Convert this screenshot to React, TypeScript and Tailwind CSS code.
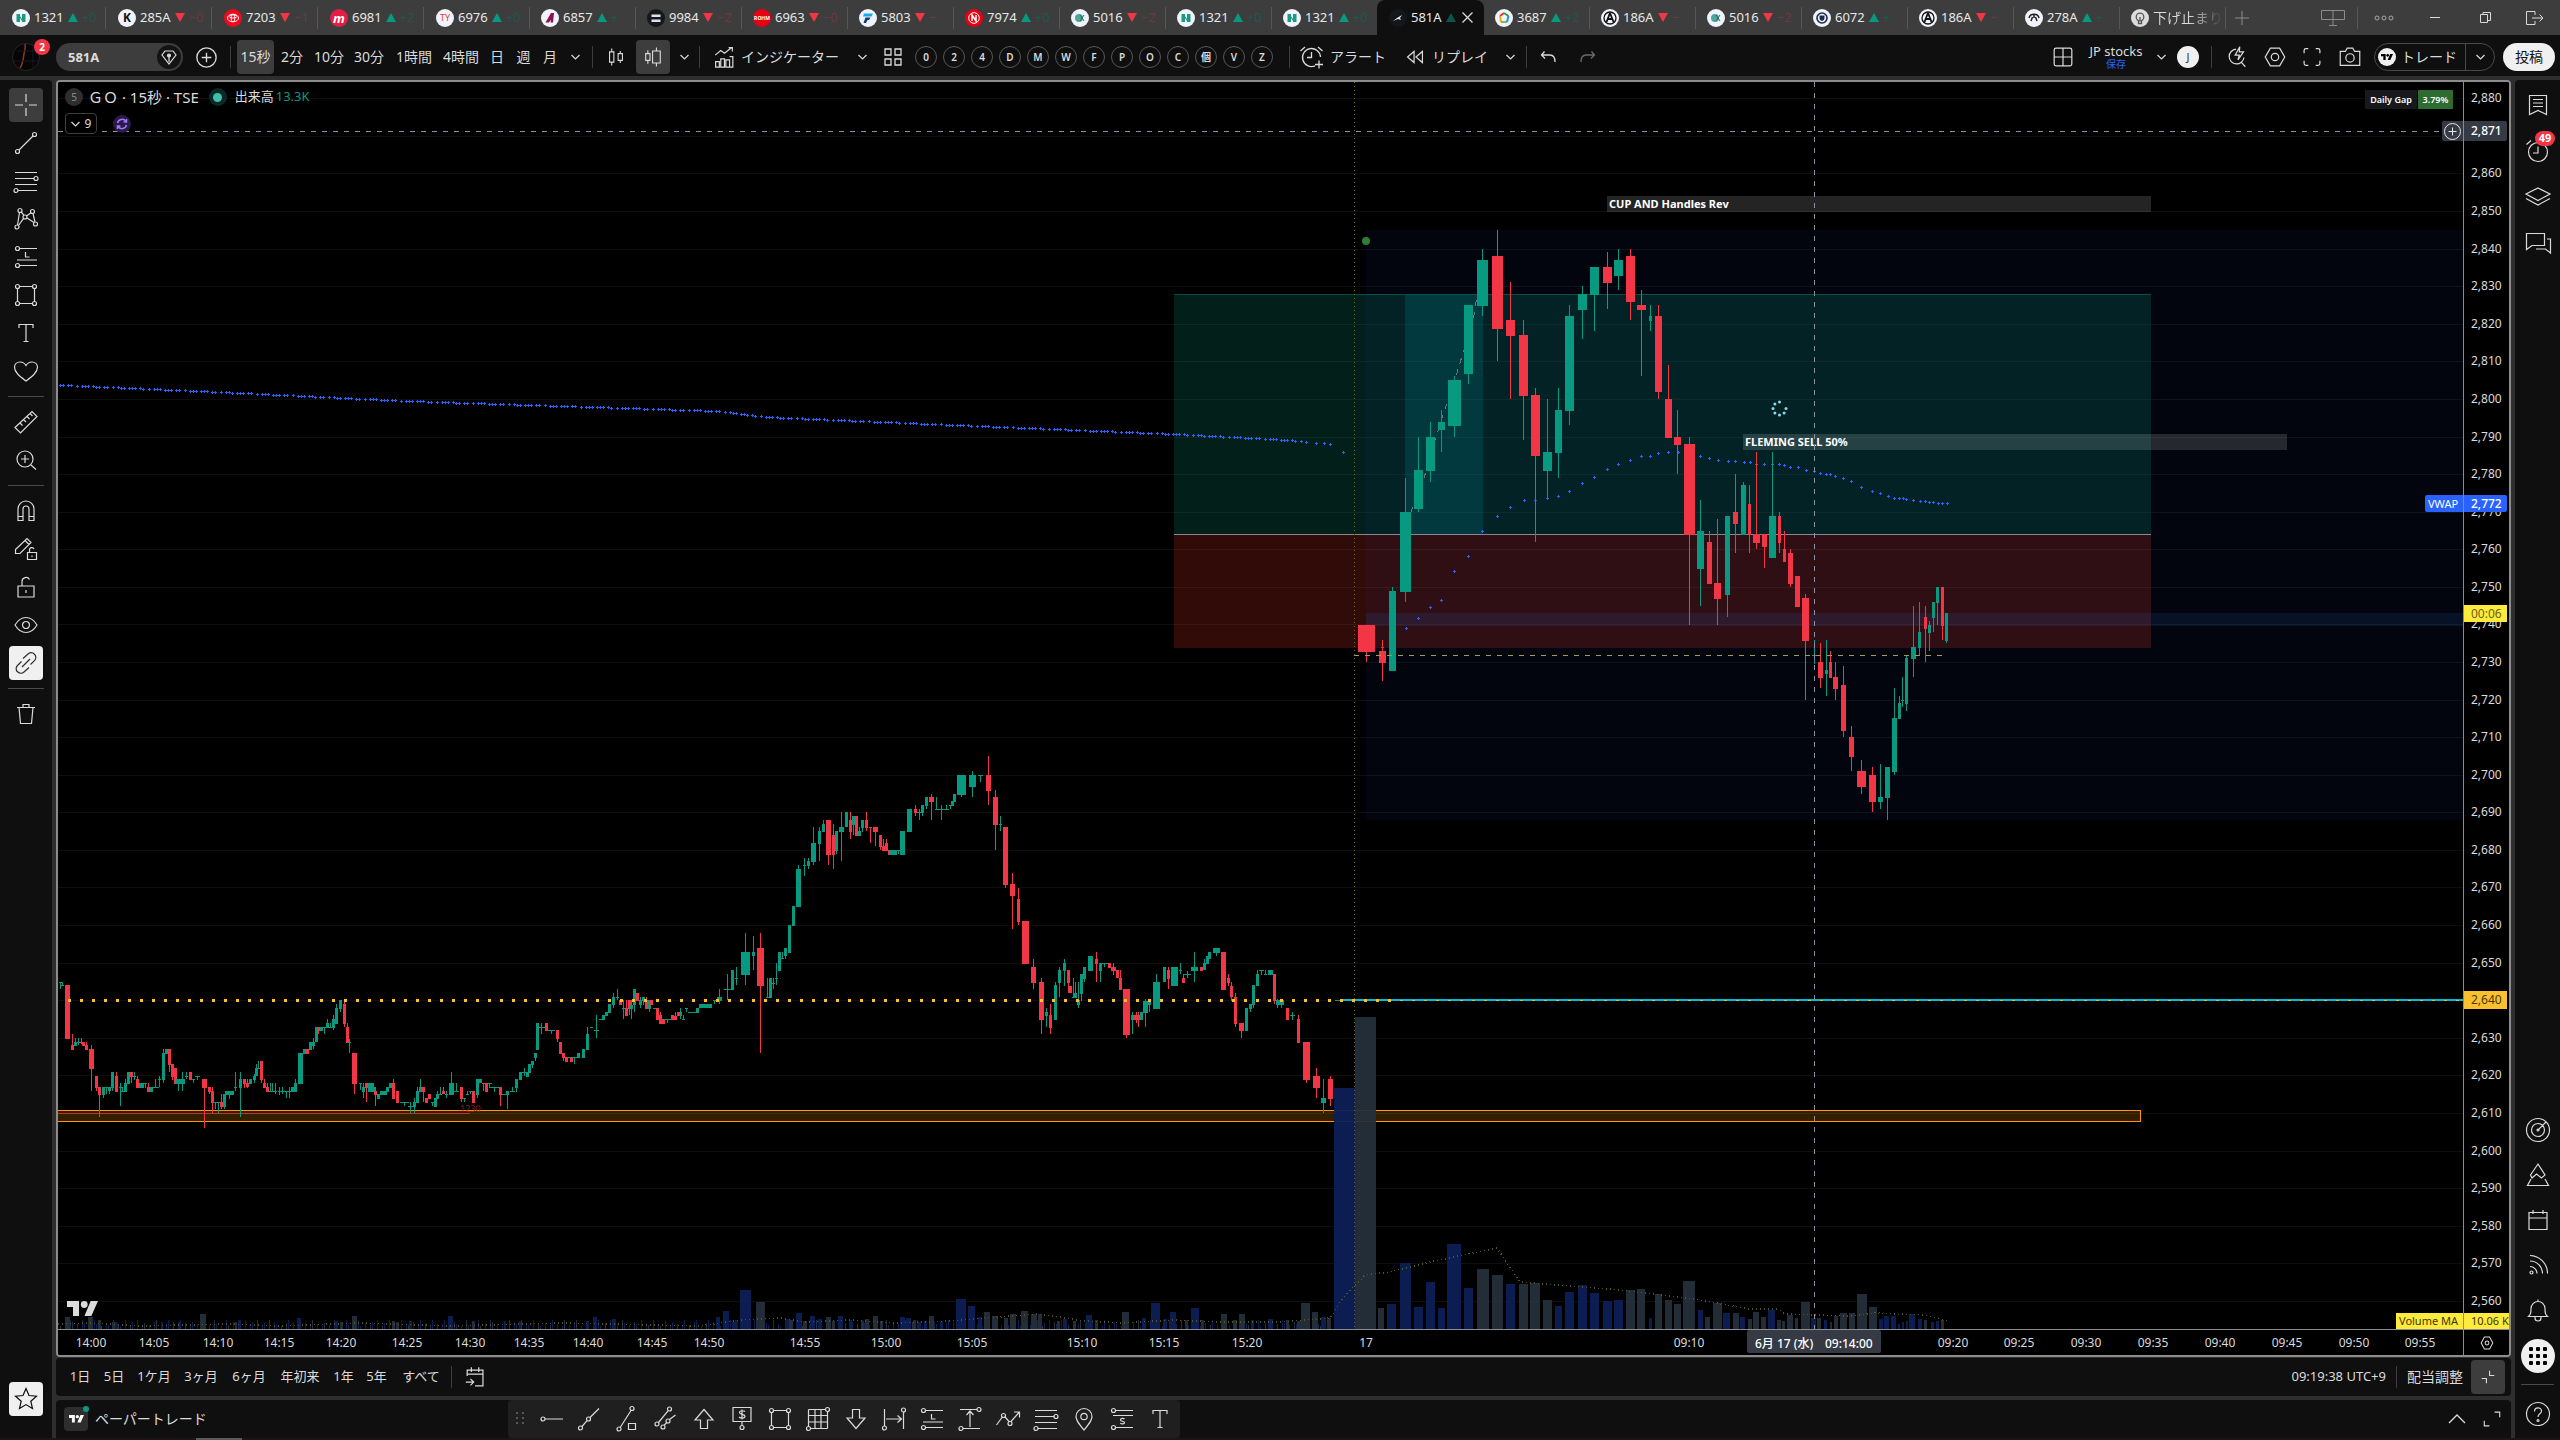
import React from "react";

const FONT = "font-['Noto_Sans','Noto_Sans_CJK_JP',sans-serif]";

/* ---------- icons ---------- */

const o = (x: number, y: number, r = 2) => `M${x - r} ${y}a${r} ${r} 0 1 0 ${2 * r} 0a${r} ${r} 0 1 0 ${-2 * r} 0`;

const ICONS: Record<string, string> = {
  cross: "M14 3v8M14 17v8M3 14h8M17 14h8",
  line: `${o(5.5, 22.5)}${o(22.5, 5.5)}M7 21L21 7`,
  fib: `M3 5.5h22M3 11.5h19M3 17.5h22M6 23.5h19${o(24, 11.5)}${o(4, 23.5)}`,
  pattern: `${o(5, 22)}${o(8, 5.5)}${o(13, 12)}${o(20.5, 6.5)}${o(23.5, 19)}M5.5 20L7.5 7.5M9.3 7L12 10.3M14.6 11L19 7.8M6.5 20.5L11.6 13.4M15 13L22 17.6M21 8.5L23 17`,
  forecast: `${o(5.5, 5.5)}${o(5.5, 22.5)}M7.5 5.5H25M5 17h20M7.5 22.5H25M13.5 9v5h4`,
  rect: `${o(5.5, 5.5)}${o(22.5, 5.5)}${o(5.5, 22.5)}${o(22.5, 22.5)}M7.5 5.5h13M7.5 22.5h13M5.5 7.5v13M22.5 7.5v13`,
  text: "M7 9V5.5h14V9M14 5.5v17M11.500 22.500h5",
  heart: "M14 24C8 19.500 2.500 15.500 2.500 10.300C2.500 7 5 5 8 5c2.500 0 4.700 1.300 6 3.500C15.300 6.300 17.500 5 20 5c3 0 5.500 2 5.500 5.300C25.500 15.500 20 19.500 14 24z",
  ruler: "M3 19.500L20 3.500l5 5L8.500 25zM8 15l2.500 2.500M11.500 11.500l2.500 2.500M15 8.500l2.500 2.500M18 5.500l2.500 2.500",
  zoom: `${o(13, 13, 8)}M19 19l5 4.500M13 9v8M9 13h8`,
  magnet: "M6 23.500V12a8 8 0 0 1 16 0v11.500h-5V12a3 3 0 0 0-6 0v11.500zM6 19.500h5M17 19.500h5",
  pencilLock: "M3.500 14.500L15 3.500l4 4L8 18.500H3.500zM13 5.500l4 4M15.500 17.500h9v7h-9zM17.500 17.500v-2.500a2.300 2.300 0 0 1 4.500-.8M20 20.500v1.500",
  lock: "M6 13h16v11H6zM10 13V8.500a4 4 0 0 1 7.500-2M14 17v3",
  eye: `M3 14c3-5 7-7.500 11-7.500S22 9 25 14c-3 5-7 7.500-11 7.500S6 19 3 14z${o(14, 14, 3.5)}`,
  link: "M11 9.500l5-4.500c2-1.600 4.500-1.600 6.500.3s1.600 4.700 0 6.300L18.500 15.500M9.500 12.500L5.500 16.500c-1.600 1.600-2 4.400 0 6.300s4.800 1.800 6.500.2l5-4.500M10 18l8-8",
  trash: "M5 7.500h18M11 7V4.500h6V7M7 7.500l1.500 16h11L21 7.500",
  star: "M14 3.500l3 7 7.500.7-5.700 5 1.700 7.300L14 19.600l-6.500 3.900 1.700-7.300-5.700-5 7.500-.7z",
  hline: `${o(5, 14)}M7 14h18`,
  lineMid: `${o(4.5, 23)}${o(12.5, 14)}M6 21.500L11 15.700M14 12.500L23 3.500`,
  lineBox: `${o(5, 24)}${o(18, 3.5)}M6.500 22L17 5.500M14.500 18.500h7v6h-7z`,
  channel: `${o(5, 19)}${o(17.500, 4)}${o(16, 16)}${o(11, 22)}M6.500 17.500L16 5.800M17.500 14.500L23.500 10M12 20.300L15 17.500`,
  up: "M14 4.500L23 15h-5.500v8.500h-7V15H5z",
  down: "M14 23.500L23 13h-5.500V4.500h-7V13H5z",
  dollar: `M5 2.500h18v14H5zM14 16.500v4${o(14, 22.5)}M17 6.500c-1-1-5.500-1.300-5.500 1s5.500 1.500 5.500 3.800-4.500 2.200-6 .7M14 4.500v10`,
  gridbox: `M4.500 4.500h17M4.500 4.500V22M23.500 6.500v17M6.500 23.500h17M4.500 10.500h19M4.500 17h19M11 4.500v19M17 4.500v19${o(23.5, 4.5)}${o(4.5, 23.5)}`,
  range: `M4.500 4v17M23.500 7v17M6 14h15M17.500 10.500l4 3.500-4 3.500${o(4.5, 23)}${o(23.5, 5)}`,
  vrange: `M4 4.500h17M7 23.500h17M14 7v15M10.500 10l3.500-4 3.500 4${o(23, 4.5)}${o(5, 23.5)}`,
  zigzag: `M2.500 20L8 12.500M11 12l4.500 5M17 16.500L25.500 7M20 7h5.500v5.500${o(9.5, 10.5)}${o(16, 18.5)}`,
  pin: `M14 25c-5-6-8-9.500-8-13.500a8 8 0 0 1 16 0C22 15.500 19 19 14 25z${o(14, 11.5, 3.2)}`,
  short: `${o(5.5, 5.5)}${o(5.5, 22.5)}M7.500 5.500H25M5 10.500h20M7.500 22.500H25M16.500 14c-1-1-4-.8-4 .9s4 1 4 2.700-3.200 1.700-4.200.5`,
  news: "M5.500 4.500h17v19l-8.500-4-8.500 4zM9 8.500h10M9 12h10M9 15.500h10",
  alarm: `${o(14, 15, 9.5)}M14 9.500V16H9M2.500 7.500L7 3.500M21 3.500l4.500 4`,
  layers: "M14 5L26 11 14 17.500 2 11zM2 15.500L14 22l12-6.500",
  chat: "M2.500 4.500h18v12H8l-5.500 4zM12 20h9.500l5 4V10h-3.500",
  radar: `${o(14, 14, 11.5)}${o(14, 14, 6.5)}${o(14, 14, 1)}M14 14L22 6`,
  mountain: "M14 3L21 14l-3.500 3-5-4-4.500 4L6.500 14zM7 18l-3.500 6.500h21L21 18",
  calendar: "M5 6.500h18v17H5zM5 12h18M9 4v4M19 4v4",
  rss: `${o(7.500, 21.500, 1.5)}M6 15.500a7 7 0 0 1 7 7M6 10a12.500 12.500 0 0 1 12.500 12.500M6 4.500a18 18 0 0 1 17.500 18`,
  bell: "M4.500 20.500c2-2 2.500-3 2.500-8a7 7 0 0 1 14 0c0 5 .5 6 2.500 8zM11 20.500v1.500a3 3 0 0 0 6 0v-1.500M14 5.500V3.500",
  help: `${o(14, 14, 11.5)}M10.500 11.500c0-5 7-4.700 7-.5 0 3-3.500 2.500-3.500 6${o(14, 20.5, 1)}`,
  candles: "M9 4v4M9 20v4M6.500 8h5v12h-5zM19 7v3M19 18v3M16.500 10h5v8h-5z",
  volCandles: "M8 6v4M8 18v4M5.500 10h5v8h-5zM18 3v4M18 21v4M13.500 7h9v14h-9z",
  indicators: "M4.500 12l6-5 4 3L22 4M19 4h4v4M5 19h4v6H5zM10.500 16h4v9h-4zM16 17h4v8h-4zM20 13.500h3.500V25H20",
  tiles: "M6 6h6v6H6zM16 6h6v6h-6zM6 16h6v6H6zM16 16h6v6h-6z",
  addAlert: "M17 22.800A9 9 0 1 1 22.500 14M13.500 9v5.500H9M2.500 8L7 4M20 4l4.500 4M21 17.500v8M17 21.500h8",
  replay: "M13 8v12l-7-6zM22 8v12l-7-6z",
  undo: "M9.500 8.500L6.500 12l3.500 3.500M6.500 12H15c3.500 0 5 3 5 7",
  redo: "M18.500 8.500l3 3.500-3.500 3.500M21.500 12H13c-3.500 0-5 3-5 7",
  layout: "M6.500 4.500h15a2 2 0 0 1 2 2v15a2 2 0 0 1-2 2h-15a2 2 0 0 1-2-2v-15a2 2 0 0 1 2-2zM14 4.500v19M4.500 14H14M14 14h9.500",
  bolt: "M13 5.500a8 8 0 1 0 8.500 9M19 20l4 4.500M17 3l-5 9h4.500L15 17l6-8.500h-4.500z",
  hex: `M9 4.500h10l5.500 9.500L19 23.500H9L3.500 14z${o(14, 14, 4)}`,
  full: "M5.500 10V7a2 2 0 0 1 2-2H10M18 5h2.500a2 2 0 0 1 2 2v3M22.500 18v3a2 2 0 0 1-2 2H18M10 23H7.500a2 2 0 0 1-2-2v-3",
  camera: `M4 8h5l2-3.500h6L19 8h5.500v15h-21V8z${o(14, 15, 4.5)}`,
  plusO: `${o(14, 14, 10)}M14 9v10M9 14h10`,
  goto: "M4.500 13V6.500h17v17H13M4.500 11h17M9 3.500v5M17 3.500v5M3 19.500h8M8 16l3.500 3.500L8 23",
  collapse: "M16 6v6h6M12 22v-6H6",
  maximise: "M17 6h6v6M11 22H5v-6",
  chevUp: "M6 18l8-8 8 8",
  gear: `M10 4.500h8l5 9.500-5 9.500h-8L5 14z${o(14, 14, 3)}`,
};

function Ico({ n, size = 28, w = 1.3, className = "" }: { n: string; size?: number; w?: number; className?: string }) {
  return (
    <svg width={size} height={size} viewBox="0 0 28 28" fill="none" stroke="currentColor" strokeWidth={w} className={`shrink-0 ${className}`} aria-hidden="true">
      <path d={ICONS[n]} />
    </svg>
  );
}

function Chev({ className = "" }: { className?: string }) {
  return (
    <svg width="9" height="6" viewBox="0 0 9 6" fill="none" stroke="currentColor" strokeWidth="1.2" className={`shrink-0 ${className}`} aria-hidden="true">
      <path d="M0.500 1L4.500 5L8.500 1" />
    </svg>
  );
}

function TvMark({ w }: { w: number }) {
  return (
    <svg width={w} height={w / 2} viewBox="0 0 36 18" fill="currentColor" aria-hidden="true">
      <path d="M0 0h14v18H7V7H0zM28 18h-8L27.500 0H36z" />
      <circle cx="20" cy="4" r="4" />
    </svg>
  );
}

/* ---------- window tabs ---------- */

type Tab = { code: string; up?: boolean; mark: string; tail?: string; active?: boolean };
const TABS: Tab[] = [
  { code: "1321", up: true, mark: "nikko", tail: "+0" },
  { code: "285A", up: false, mark: "k", tail: "−0" },
  { code: "7203", up: false, mark: "toyota", tail: "−1" },
  { code: "6981", up: true, mark: "m", tail: "+2" },
  { code: "6976", up: true, mark: "ty", tail: "+0" },
  { code: "6857", up: true, mark: "adv", tail: "+" },
  { code: "9984", up: false, mark: "sb", tail: "−2" },
  { code: "6963", up: false, mark: "rohm", tail: "−0" },
  { code: "5803", up: false, mark: "f", tail: "−" },
  { code: "7974", up: true, mark: "n", tail: "+0" },
  { code: "5016", up: false, mark: "jx", tail: "−2" },
  { code: "1321", up: true, mark: "nikko", tail: "+0" },
  { code: "1321", up: true, mark: "nikko", tail: "+0" },
  { code: "581A", up: true, mark: "go", active: true },
  { code: "3687", up: true, mark: "fix", tail: "+2" },
  { code: "186A", up: false, mark: "astro", tail: "−" },
  { code: "5016", up: false, mark: "jx", tail: "−2" },
  { code: "6072", up: true, mark: "shield", tail: "+" },
  { code: "186A", up: false, mark: "astro", tail: "−" },
  { code: "278A", up: true, mark: "terra", tail: "+" },
  { code: "下げ止まり", mark: "bulb" },
];

function Mark({ m }: { m: string }) {
  const bg: Record<string, string> = { toyota: "#eb0a1e", m: "#e01e46", sb: "#14181c", rohm: "#e60012", n: "#e60012", go: "#14181c", bulb: "#dcdcdc" };
  const t = (s: string, fill: string, size: number, extra = "") => (
    <text x="9" y={9 + size * 0.36} textAnchor="middle" fontSize={size} fill={fill} className={extra}>{s}</text>
  );
  return (
    <svg width="18" height="18" viewBox="0 0 18 18" className="shrink-0" aria-hidden="true">
      <circle cx="9" cy="9" r="9" fill={bg[m] ?? "#f0f3fa"} />
      {m === "nikko" && <g fill="#1a9a80"><path d="M4.500 5h3.500v8H4.500zM10 5h3.500v8H10zM8 7l2 3v2L8 9z" /></g>}
      {m === "k" && t("K", "#111", 12, "font-bold")}
      {m === "toyota" && <g fill="none" stroke="#fff" strokeWidth="0.9"><ellipse cx="9" cy="9" rx="5.500" ry="3.800" /><ellipse cx="9" cy="9" rx="1.900" ry="3.700" /><ellipse cx="9" cy="7.400" rx="4" ry="1.600" /></g>}
      {m === "m" && t("m", "#fff", 13, "font-bold italic")}
      {m === "ty" && t("TY", "#e23a3a", 9)}
      {m === "adv" && <path d="M4.500 13.500L10 4h3l-1 9.500H9.500l.4-3-2 3z" fill="#8b1152" />}
      {m === "sb" && <path d="M4.500 5.500h9V8h-9zM4.500 10.500h9V13h-9z" fill="#dfe3e8" />}
      {m === "rohm" && t("ROHM", "#fff", 5, "font-bold")}
      {m === "f" && <><path d="M5 4.500h9l-1.500 3H4z" fill="#1aa9e8" /><path d="M6.500 8.500h5L10 11H8.500L7 14H4.500z" fill="#123a7a" /></>}
      {m === "n" && <g fill="none" stroke="#fff"><circle cx="9" cy="9" r="5.300" /><path d="M7 12V6l4 6V6" strokeWidth="1.500" /></g>}
      {m === "jx" && <><circle cx="8" cy="9" r="4" fill="#4aa79a" /><path d="M9 6l4 6M13 6L9 12" stroke="#2a6d66" /></>}
      {m === "go" && <path d="M4 12l4-3 5-3-2 3 1 2-3-1z" fill="#e8e8e8" />}
      {m === "fix" && <g fill="none" strokeWidth="2"><path d="M9 4L5 7" stroke="#e33" /><path d="M5 7l1 6" stroke="#f5a623" /><path d="M6 13h6" stroke="#7ac143" /><path d="M12 13l1.500-6" stroke="#2196f3" /><path d="M13.500 7L9 4" stroke="#2e9e4a" /></g>}
      {m === "astro" && <g fill="none" stroke="#111" strokeWidth="1.300"><circle cx="9" cy="9" r="6" /><path d="M9 4L5.500 13M9 4l3.500 9M7 10h4" strokeWidth="1.800" /></g>}
      {m === "shield" && <><circle cx="9" cy="9" r="5" fill="none" stroke="#1b2a4a" strokeWidth="1.600" /><path d="M6.500 6.500h5V9c0 1.500-1 2.500-2.500 3-1.500-.5-2.500-1.500-2.500-3z" fill="#1b2a4a" /></>}
      {m === "terra" && <g fill="none" stroke="#222" strokeWidth="1.500"><path d="M4 9c1-5 9-5 10 0M6 12l1.500-4M12 12l-1.500-4M9 6v3" /></g>}
      {m === "bulb" && <g fill="none" stroke="#555" strokeWidth="1.300"><circle cx="9" cy="8" r="3.800" /><path d="M7.500 11.500v3h3v-3M9 8v3" /></g>}
    </svg>
  );
}

function TabBar() {
  return (
    <header className="flex h-[35px] shrink-0 items-center bg-[#3d3d3d] text-[13px]">
      <nav className="flex h-full" aria-label="タブ">
        {TABS.map((t, i) => {
          const edge = i === 12 || i === 13;
          return (
            <div key={i} className={`relative flex w-[106px] items-center overflow-hidden pl-3 ${i > 4 ? "-ml-px w-[107px]" : ""} ${t.active ? "rounded-t-lg bg-[#0f0f0f]" : ""}`}>
              <button className="flex min-w-0 items-center gap-1 whitespace-nowrap">
                <Mark m={t.mark} />
                <span className={t.mark === "bulb" ? "bg-gradient-to-r from-[#dbdbdb] from-50% to-transparent bg-clip-text text-sm text-transparent" : "text-[#e8e8e8]"}>{t.code}</span>
                {t.up !== undefined && (
                  <svg width="10" height="9" viewBox="0 0 10 9" aria-hidden="true" className={t.active ? "opacity-50" : ""}>
                    <path d={t.up ? "M0 9L5 0L10 9z" : "M0 0L5 9L10 0z"} fill={t.up ? "#089981" : "#f23645"} />
                  </svg>
                )}
                {t.tail && <span className={t.up ? "text-[#1f564e]" : "text-[#6b3a3e]"}>{t.tail}</span>}
              </button>
              {t.active && (
                <button className="ml-[6px] text-[#dbdbdb]" aria-label="閉じる">
                  <svg width="11" height="11" viewBox="0 0 11 11" stroke="currentColor" strokeWidth="1.300"><path d="M0.500 0.500l10 10M10.500 0.500l-10 10" /></svg>
                </button>
              )}
              {!edge && <span className="absolute top-[7px] right-0 h-[22px] w-px bg-[#575757]" />}
            </div>
          );
        })}
      </nav>
      <button className="ml-[9px] text-[#8c8c8c]" aria-label="新しいタブ">
        <svg width="14" height="14" viewBox="0 0 14 14" stroke="currentColor"><path d="M7 0v14M0 7h14" /></svg>
      </button>
      <div className="ml-auto flex h-full items-center text-[#dbdbdb]">
        <button className="px-3 text-[#8c8c8c]" aria-label="ウィンドウ">
          <svg width="24" height="16" viewBox="0 0 24 16" fill="none" stroke="currentColor"><path d="M.5.500h23v9H.5zM12 .5V15M8 15.500h8" /></svg>
        </button>
        <span className="h-[22px] w-px bg-[#575757]" />
        <button className="w-[52px] text-[#a8a8a8]" aria-label="メニュー">
          <svg width="20" height="6" viewBox="0 0 20 6" fill="none" stroke="currentColor" className="mx-auto"><circle cx="3" cy="3" r="2" /><circle cx="10" cy="3" r="2" /><circle cx="17" cy="3" r="2" /></svg>
        </button>
        <button className="w-[50px]" aria-label="最小化"><span className="mx-auto block h-px w-[10px] bg-[#dbdbdb]" /></button>
        <button className="w-[50px]" aria-label="元に戻す">
          <svg width="11" height="11" viewBox="0 0 11 11" fill="none" stroke="currentColor" className="mx-auto"><path d="M.5 2.500h7v8h-7zM3 2.500v-2h7.500v8h-3" /></svg>
        </button>
        <button className="w-[50px]" aria-label="終了">
          <svg width="18" height="14" viewBox="0 0 18 14" fill="none" stroke="currentColor" className="mx-auto"><path d="M9 4V.5H.5v13H9V10M6 7h11M13.500 3.500L17 7l-3.500 3.500" /></svg>
        </button>
      </div>
    </header>
  );
}

/* ---------- chart toolbar ---------- */

const INTERVALS: [string, string][] = [
  ["15秒", "w-[37px] rounded bg-[#3d3d3d]"],
  ["2分", "w-[36px]"],
  ["10分", "w-[38px]"],
  ["30分", "w-[42px]"],
  ["1時間", "w-[48px]"],
  ["4時間", "w-[46px]"],
  ["日", "w-[26px]"],
  ["週", "w-[27px]"],
  ["月", "w-[26px]"],
];
const CIRCLES = ["0", "2", "4", "D", "M", "W", "F", "P", "O", "C", "個", "V", "Z"];
const Sep = ({ c = "" }: { c?: string }) => <span className={`h-[22px] w-px shrink-0 bg-[#3d3d3d] ${c}`} />;

function Toolbar() {
  return (
    <div className="flex h-[41px] shrink-0 items-center bg-[#0f0f0f] pt-[3px] text-sm whitespace-nowrap text-[#dbdbdb]">
      <button className="relative ml-3 size-7 shrink-0" aria-label="メニュー">
        <svg width="28" height="28" viewBox="0 0 28 28"><circle cx="14" cy="14" r="13.500" fill="#050505" stroke="#262626" /><path d="M8 25c3-4 3-9 4-14 .5-3 2-6 1-10" fill="none" stroke="#8a3a12" strokeWidth="1.500" /><path d="M2 18h24M5 8h18M21 4v20" stroke="#1b1430" /></svg>
        <span className="absolute -top-[4px] left-[22px] flex size-4 items-center justify-center rounded-full bg-[#f23645] text-[10px] font-bold text-white">2</span>
      </button>
      <div className="ml-4 flex h-7 w-[127px] shrink-0 items-center justify-between rounded-full bg-[#3d3d3d] pr-[2px] pl-3">
        <button className="text-[13px] font-bold">581A</button>
        <button className="flex size-6 items-center justify-center rounded-full bg-[#141414]" aria-label="銘柄ロゴ">
          <svg width="16" height="16" viewBox="0 0 16 16" fill="none" stroke="currentColor" strokeWidth="1.200"><path d="M4 2h8l3 4-7 9-7-9z" /><circle cx="8" cy="6.500" r="1.500" fill="currentColor" /><path d="M8 8v5" /></svg>
        </button>
      </div>
      <button className="ml-[10px] shrink-0" aria-label="比較"><Ico n="plusO" size={27} w={1.4} /></button>
      <Sep c="ml-[10px] mr-[6px]" />
      {INTERVALS.map(([t, c]) => (
        <button key={t} className={`h-[34px] shrink-0 ${c}`}>{t}</button>
      ))}
      <button className="ml-[2px] w-[20px]" aria-label="時間足一覧"><Chev className="mx-auto" /></button>
      <Sep c="ml-[7px]" />
      <button className="ml-[7px] flex w-[32px] justify-center" aria-label="ローソク足"><Ico n="candles" size={24} /></button>
      <button className="ml-[4px] flex h-[34px] w-[34px] items-center justify-center rounded bg-[#3d3d3d]" aria-label="出来高ローソク足"><Ico n="volCandles" size={24} /></button>
      <button className="w-[29px]" aria-label="チャートタイプ"><Chev className="mx-auto" /></button>
      <Sep />
      <button className="ml-[11px] flex items-center gap-[4px]"><Ico n="indicators" size={26} />インジケーター</button>
      <button className="ml-[11px] w-[24px]" aria-label="お気に入り"><Chev className="mx-auto" /></button>
      <button className="ml-[5px]" aria-label="テンプレート"><Ico n="tiles" size={28} /></button>
      <div className="ml-[8px] flex gap-[6px]">
        {CIRCLES.map((c) => (
          <button key={c} className="flex size-[22px] items-center justify-center rounded-full border border-[#575757] text-[10px] font-semibold">{c}</button>
        ))}
      </div>
      <Sep c="ml-[16px]" />
      <button className="ml-[8px] flex items-center gap-[4px]"><Ico n="addAlert" size={28} />アラート</button>
      <button className="ml-[16px] flex items-center gap-[4px]"><Ico n="replay" size={26} />リプレイ</button>
      <button className="ml-[10px] w-[24px]" aria-label="リプレイ設定"><Chev className="mx-auto" /></button>
      <Sep c="ml-[4px]" />
      <button className="ml-[8px]" aria-label="元に戻す"><Ico n="undo" size={28} /></button>
      <button className="ml-[10px] text-[#6b6b6b]" aria-label="やり直す"><Ico n="redo" size={28} /></button>

      <div className="ml-auto flex items-center pr-[5px]">
        <button aria-label="レイアウト"><Ico n="layout" size={26} /></button>
        <button className="ml-[11px] flex w-[58px] flex-col items-center leading-none">
          <span className="text-[13px] leading-[15px]">JP stocks</span>
          <span className="text-[10px] leading-[11px] text-[#2962ff]">保存</span>
        </button>
        <button className="w-[32px]" aria-label="レイアウト一覧"><Chev className="mx-auto" /></button>
        <span className="flex size-[22px] items-center justify-center rounded-full bg-[#f0f0f0] text-[11px] text-[#333]">J</span>
        <Sep c="mx-[12px]" />
        <button aria-label="クイック検索"><Ico n="bolt" size={26} /></button>
        <button className="ml-[12px]" aria-label="設定"><Ico n="hex" size={26} /></button>
        <button className="ml-[11px]" aria-label="全画面"><Ico n="full" size={26} /></button>
        <button className="ml-[12px]" aria-label="スナップショット"><Ico n="camera" size={26} /></button>
        <div className="ml-[11px] flex h-7 items-center rounded-full border border-[#4a4a4a]">
          <button className="flex items-center gap-[5px] pr-[8px] pl-[3px]">
            <span className="flex size-[18px] items-center justify-center rounded-full bg-[#f0f0f0] text-black"><TvMark w={12} /></span>
            トレード
          </button>
          <span className="h-full w-px bg-[#4a4a4a]" />
          <button className="w-[28px]" aria-label="トレードメニュー"><Chev className="mx-auto" /></button>
        </div>
        <button className="ml-[8px] h-7 w-[52px] rounded-full bg-[#f0f0f0] text-[#0f0f0f]">投稿</button>
      </div>
    </div>
  );
}

/* ---------- side bars ---------- */

function Tool({ n, on = "", label }: { n: string; on?: string; label: string }) {
  return (
    <button aria-label={label} className="flex h-[38px] items-center justify-center">
      <span className={`flex size-[34px] items-center justify-center rounded ${on}`}><Ico n={n} w={1.2} /></span>
    </button>
  );
}
const Rule = () => <span className="my-[6px] ml-2 h-px w-9 bg-[#4a4a4a]" />;

function LeftBar() {
  return (
    <aside className="flex w-[52px] shrink-0 flex-col rounded-tr bg-[#0f0f0f] pt-[6px] text-[#dbdbdb]">
      <Tool n="cross" on="bg-[#3d3d3d]" label="カーソル" />
      <Tool n="line" label="トレンドライン" />
      <Tool n="fib" label="フィボナッチ" />
      <Tool n="pattern" label="パターン" />
      <Tool n="forecast" label="予測" />
      <Tool n="rect" label="図形" />
      <Tool n="text" label="テキスト" />
      <Tool n="heart" label="アイコン" />
      <Rule />
      <Tool n="ruler" label="計測" />
      <Tool n="zoom" label="ズーム" />
      <Rule />
      <Tool n="magnet" label="マグネット" />
      <Tool n="pencilLock" label="描画モード" />
      <Tool n="lock" label="ロック" />
      <Tool n="eye" label="非表示" />
      <Tool n="link" on="bg-[#f0f0f0] text-[#2e2e2e]" label="同期" />
      <Rule />
      <Tool n="trash" label="削除" />
      <div className="mt-auto mb-[20px] flex flex-col">
        <Tool n="star" on="bg-[#f0f0f0] text-[#0f0f0f]" label="お気に入り" />
      </div>
    </aside>
  );
}

function SideButton({ n, label, tall = false, children }: { n: string; label: string; tall?: boolean; children?: React.ReactNode }) {
  return (
    <button aria-label={label} className={`relative flex items-center justify-center ${tall ? "h-[46px]" : "h-[45px]"}`}>
      <Ico n={n} w={1.2} />
      {children}
    </button>
  );
}

function RightBar() {
  return (
    <aside className="flex w-[45px] shrink-0 flex-col rounded-tl bg-[#0f0f0f] pt-[2px] pb-[2px] text-[#dbdbdb]">
      <SideButton tall n="news" label="ウォッチリスト" />
      <SideButton tall n="alarm" label="アラート">
        <span className="absolute top-[3px] left-[20px] flex h-[15px] w-[20px] items-center justify-center rounded-full bg-[#f23645] text-[11px] font-bold text-white">49</span>
      </SideButton>
      <SideButton tall n="layers" label="オブジェクト" />
      <SideButton tall n="chat" label="チャット" />
      <div className="mt-auto flex flex-col">
        <SideButton n="radar" label="スクリーナー" />
        <SideButton n="mountain" label="パイン" />
        <SideButton n="calendar" label="カレンダー" />
        <SideButton n="rss" label="ニュース" />
        <SideButton n="bell" label="通知" />
        <button aria-label="アプリ" className="mx-auto mt-[7px] flex size-[34px] items-center justify-center rounded-full bg-[#f0f0f0] text-black">
          <svg width="20" height="20" viewBox="0 0 20 20" fill="currentColor">
            {[0, 1, 2].map((r) => [0, 1, 2].map((c) => <rect key={`${r}${c}`} x={1 + c * 7} y={1 + r * 7} width="4" height="4" rx="1" />))}
          </svg>
        </button>
        <span className="mx-auto mt-[11px] mb-[6px] h-px w-[33px] bg-[#4a4a4a]" />
        <SideButton n="help" label="ヘルプ" />
      </div>
    </aside>
  );
}

/* ---------- chart ---------- */

const UP = "#089981";
const DOWN = "#f23645";
const BLUE = "#0d1f57";
const SLATE = "#24303c";
const TXT = "#dbdbdb";

type Scale = { x: number; y: number; kx: number; ky: number };
/* x centre, width, body top, body bottom, high, low; a negative width is a falling candle */
type Candle = number[];

const MORNING_A: Scale = { x: 1300, y: 200, kx: 2.3758, ky: 2.45 };
const MORNING_B: Scale = { x: 1680, y: 400, kx: 3, ky: 3 };
const NOON_A: Scale = { x: 50, y: 740, kx: 2.24, ky: 3 };
const NOON_B: Scale = { x: 700, y: 740, kx: 2.24, ky: 2.529 };

const morningA: Candle[] = [
  [158, -40, 1041, 1107, 1041, 1132], [196, -16, 1105, 1134, 1078, 1178], [219.5, 17, 958, 1154, 948, 1154], [251, 26, 764, 960, 681, 985],
  [281.5, 21, 661, 757, 581, 764], [310, 22, 581, 664, 544, 691], [336, 16, 544, 563, 514, 617], [367, 30, 441, 554, 432, 581],
  [400.5, 21, 257, 426, 257, 451], [434, 26, 147, 260, 120, 284], [469, -26, 137, 316, 73, 394], [500, -22, 294, 333, 201, 488],
  [531, -22, 331, 480, 294, 588], [559.5, -21, 478, 627, 461, 838], [588, 22, 617, 664, 488, 730], [614, 16, 514, 620, 461, 681],
  [640.5, 21, 284, 517, 257, 551], [671, 22, 230, 269, 211, 341], [699.5, 21, 164, 233, 164, 321], [730.5, -21, 164, 203, 127, 267],
  [756.5, 21, 147, 186, 120, 220], [785, -22, 137, 250, 120, 294], [811.5, -21, 257, 269, 220, 431], [832.5, 7, 284, 296, 257, 321],
  [851.5, -17, 284, 470, 257, 488], [875.5, -17, 488, 583, 404, 583], [897, -16, 581, 600, 514, 671],
];
const morningB: Candle[] = [
  [28.5, -33, 132, 405, 111, 675], [61.5, 21, 393, 507, 300, 618], [88.5, -15, 426, 552, 393, 552], [112.5, -21, 549, 597, 357, 675],
  [142.5, 15, 348, 585, 348, 651], [166.5, -15, 336, 372, 222, 459], [190.5, 15, 255, 405, 246, 405], [208.5, -9, 312, 405, 255, 459],
  [229.5, -21, 402, 429, 156, 447], [253.5, -15, 402, 441, 402, 504], [277.5, 21, 348, 474, 156, 474], [298.5, -9, 348, 429, 336, 459],
  [313.5, -9, 447, 486, 393, 486], [331.5, -15, 459, 552, 447, 561], [352.5, -15, 528, 621, 528, 621], [376.5, -21, 594, 723, 582, 900],
  [403.5, 15, 765, 768, 720, 792], [421.5, -15, 786, 834, 729, 864], [439.5, 9, 810, 822, 720, 888], [451.5, -9, 786, 834, 753, 834],
  [466.5, -15, 831, 867, 786, 900], [490.5, -15, 855, 993, 798, 1011], [514.5, -15, 1011, 1071, 978, 1113], [544.5, -27, 1113, 1161, 1080, 1182],
  [577.5, -21, 1125, 1206, 1101, 1236], [601.5, 15, 1191, 1206, 1092, 1227], [622.5, 15, 1101, 1194, 1101, 1260], [643.5, 15, 954, 1116, 864, 1125],
  [658.5, 9, 909, 957, 888, 957], [667.5, 9, 900, 903, 831, 921], [679.5, 9, 774, 912, 765, 933], [700.5, 15, 741, 777, 618, 831],
  [718.5, 9, 696, 744, 606, 768], [736.5, -9, 651, 687, 618, 786], [748.5, 9, 675, 699, 663, 753], [760.5, 9, 606, 654, 606, 696],
  [772.5, 9, 561, 609, 561, 675], [787.5, -9, 561, 678, 561, 720], [799.5, 9, 639, 723, 639, 729],
];
const noonA: Candle[] = [
  [24, 8, 726, 729, 726, 747], [29, 4, 735, 738, 726, 738], [39.5, -11, 735, 896, 735, 896], [50, -6, 915, 930, 882, 930], [57, 7, 906, 917, 894, 917],
  [64, 8, 905, 908, 894, 915], [70, -5, 905, 910, 894, 912], [75, -6, 906, 917, 906, 917], [81, -6, 915, 930, 906, 930], [93, -12, 927, 987, 915, 1053],
  [104, -7, 1008, 1044, 1008, 1053], [111, -7, 1041, 1065, 1041, 1131], [119, 7, 1041, 1065, 1041, 1074], [127, 7, 1041, 1044, 1041, 1062],
  [133, 7, 1041, 1053, 1041, 1062], [140, 6, 996, 1044, 996, 1053], [149, -6, 1008, 1056, 996, 1056], [158, 7, 1041, 1044, 1029, 1098], [163, 6, 1053, 1056, 1041, 1056],
  [169, 6, 1029, 1056, 1017, 1056], [176, 8, 996, 1032, 996, 1032], [183, -6, 996, 1010, 996, 1029], [190, 8, 1008, 1011, 996, 1020],
  [196, -6, 1017, 1044, 1008, 1044], [205, 10, 1029, 1044, 1029, 1044], [213, 8, 1029, 1032, 1029, 1044], [221, -6, 1041, 1056, 1029, 1056],
  [228, 8, 1041, 1056, 1041, 1056], [236, 14, 1041, 1044, 1017, 1044], [246, 6, 1017, 1020, 1008, 1041], [254.5, 7, 939, 1020, 927, 1029],
  [261, 6, 927, 942, 927, 942], [267.5, -7, 927, 975, 927, 996], [274, -8, 972, 1011, 972, 1020], [281, -6, 984, 1032, 984, 1032],
  [288, 10, 1017, 1032, 1017, 1053], [297, 9, 1017, 1032, 996, 1053], [305, 8, 1008, 1011, 996, 1017], [314, -7, 996, 1020, 996, 1020],
  [321, 7, 1017, 1020, 1017, 1029], [330, 10, 1008, 1011, 1008, 1020], [346, -12, 1017, 1044, 1017, 1164], [357, -6, 1041, 1056, 1041, 1062],
  [364, -7, 1053, 1089, 1041, 1120], [371, 8, 1086, 1089, 1086, 1107], [377, 6, 1086, 1089, 1086, 1118], [384, -8, 1086, 1101, 1062, 1107],
  [390, 6, 1062, 1101, 1062, 1107], [402, 20, 1053, 1065, 1053, 1077], [416, 8, 1041, 1044, 996, 1053], [427, 7, 1017, 1044, 996, 1131],
  [436, -7, 1017, 1032, 1017, 1044], [443, -6, 1029, 1041, 1017, 1044], [450, 6, 1017, 1032, 1017, 1032], [457, 7, 1008, 1020, 1001, 1029],
  [462, 5, 984, 1008, 972, 1008], [467, 6, 984, 987, 963, 987], [473.5, -7, 963, 1020, 963, 1029], [480, -6, 1029, 1044, 1017, 1044],
  [487, -7, 1041, 1056, 1029, 1056], [494, 8, 1053, 1056, 1029, 1056], [499, 6, 1053, 1056, 1029, 1056], [505, 8, 1053, 1056, 1029, 1062], [513, 8, 1053, 1056, 1041, 1065],
  [521, 8, 1053, 1056, 1041, 1062], [530, 10, 1053, 1056, 1053, 1074], [537, 7, 1053, 1056, 1041, 1074], [544, 6, 1041, 1056, 1041, 1056],
  [550, 6, 1029, 1056, 1017, 1056], [561.5, 11, 939, 1032, 939, 1032], [570, 8, 927, 942, 927, 942], [577, -6, 927, 942, 927, 942], [584, 8, 906, 930, 906, 930],
  [590, 7, 906, 918, 894, 927], [597, 6, 861, 906, 861, 906], [601, -6, 861, 873, 861, 882], [608, 8, 861, 873, 861, 873], [615, 8, 861, 864, 861, 882],
  [622, 7, 849, 864, 837, 864], [628, 8, 861, 864, 849, 864], [634, 4, 837, 864, 825, 870], [641.5, 7, 804, 852, 792, 852], [650.5, 7, 780, 807, 780, 816],
  [660, -7, 792, 852, 780, 861], [666.5, -7, 861, 909, 849, 909], [671, 5, 906, 909, 896, 939], [682, -12, 939, 1032, 939, 1062],
  [695, 8, 1029, 1032, 1029, 1050], [703, 7, 1041, 1056, 1029, 1074], [709, -6, 1029, 1044, 1029, 1086], [717, 10, 1029, 1056, 1029, 1056],
  [724, 6, 1041, 1056, 1029, 1056], [729, -6, 1053, 1065, 1041, 1098], [736, 8, 1062, 1077, 1062, 1077], [746, 16, 1053, 1065, 1053, 1065],
  [757, 8, 1041, 1056, 1041, 1056], [763, 6, 1029, 1044, 1029, 1044], [769, -6, 1029, 1077, 1017, 1077], [778, -8, 1053, 1089, 1053, 1089],
  [793, 18, 1086, 1089, 1086, 1098], [808, 12, 1098, 1101, 1086, 1119], [816, 7, 1086, 1101, 1074, 1119], [823, 7, 1053, 1089, 1041, 1089],
  [830, 7, 1041, 1056, 1017, 1056], [836.5, -7, 1041, 1056, 1041, 1086], [843, -7, 1074, 1089, 1074, 1089], [850, -6, 1062, 1077, 1062, 1077],
  [857, 8, 1086, 1089, 1086, 1098], [863, 7, 1074, 1101, 1074, 1101], [868, 6, 1062, 1077, 1053, 1077], [875, 8, 1062, 1065, 1041, 1065],
  [882, -6, 1053, 1062, 1041, 1062], [888, 8, 1062, 1065, 1053, 1074], [899, 10, 1029, 1065, 996, 1065], [911, 10, 1053, 1056, 1029, 1056],
  [921.5, -7, 1041, 1077, 1041, 1086], [929, 8, 1074, 1077, 1074, 1086], [935, 8, 1062, 1065, 1053, 1065], [942, 8, 1053, 1056, 1053, 1062],
  [948.5, -7, 1053, 1089, 1053, 1089], [957, 7, 1017, 1065, 1017, 1074], [964, 6, 1017, 1030, 1017, 1030], [970, -8, 1029, 1032, 1029, 1053],
  [978, -8, 1029, 1056, 1029, 1056], [984, 10, 1029, 1032, 1029, 1044], [996, 18, 1041, 1044, 1041, 1056], [1009, -6, 1041, 1065, 1041, 1098],
  [1017, 12, 1062, 1065, 1062, 1065], [1025, 6, 1053, 1065, 1053, 1107], [1035, 12, 1053, 1056, 1041, 1056], [1045, 6, 1017, 1044, 1017, 1056],
  [1054, 8, 996, 1020, 996, 1020], [1062, 10, 996, 999, 984, 1008], [1069, 8, 996, 1011, 996, 1011], [1075, 7, 972, 999, 972, 999],
  [1081, 6, 963, 975, 963, 984], [1086.5, 5, 939, 954, 939, 963], [1092, 6, 849, 930, 849, 930], [1102, 16, 861, 864, 849, 882],
  [1112, -7, 849, 873, 849, 873], [1124, 16, 870, 873, 870, 882], [1136.5, -7, 870, 897, 870, 906], [1143.5, -7, 906, 942, 906, 942],
  [1150, -7, 939, 954, 939, 963], [1157, -7, 951, 966, 951, 966], [1163, 8, 951, 954, 951, 954], [1168, -7, 951, 966, 951, 966], [1175, 10, 951, 954, 951, 972],
  [1184.5, 8, 939, 954, 939, 954], [1195, 6, 927, 954, 927, 954], [1203.5, 5, 882, 930, 861, 930], [1213, 6, 861, 864, 861, 864],
  [1224, 12, 870, 873, 825, 894], [1232, 6, 837, 840, 837, 840], [1239, 7, 825, 840, 825, 840], [1246, 7, 816, 828, 816, 828], [1253.5, 7, 792, 819, 792, 819], [1262, 7, 771, 795, 759, 804],
  [1271, 8, 771, 774, 747, 780], [1278, -7, 780, 795, 780, 795], [1285, 8, 804, 807, 780, 837], [1291, -7, 804, 828, 780, 828],
  [1298, -6, 780, 807, 780, 825], [1303, 6, 795, 807, 780, 837], [1309.5, 7, 747, 795, 747, 816], [1316, -6, 759, 783, 759, 783],
  [1323, 7, 780, 795, 771, 804], [1330, 8, 771, 783, 771, 795], [1337, -8, 780, 807, 771, 807], [1343, 6, 780, 807, 780, 816], [1348, -6, 780, 795, 780, 795],
  [1355, 8, 804, 807, 804, 807], [1360.5, -7, 804, 840, 804, 840], [1367, -7, 825, 852, 816, 852], [1374, -7, 837, 852, 837, 852],
  [1384, 16, 837, 840, 837, 849], [1395, -8, 825, 840, 825, 840], [1402, -6, 828, 840, 816, 840], [1408, -7, 816, 828, 816, 828],
  [1412, 5, 816, 828, 804, 837], [1419, 6, 837, 840, 825, 840], [1426, 8, 804, 807, 804, 816], [1440, 22, 816, 819, 816, 819],
  [1451, 7, 804, 819, 804, 819], [1468, 28, 792, 805, 792, 805], [1488, 8, 780, 783, 780, 792], [1500, 10, 771, 783, 747, 792],
  [1517.5, 14, 747, 750, 702, 780], [1528, 7, 690, 750, 690, 750], [1537.5, 7, 714, 717, 681, 735],
];
const noonB: Candle[] = [
  [102, 20, 536, 594, 488, 620], [119.5, 7, 536, 545, 496, 582], [135.5, -15, 526, 622, 488, 792], [152, 8, 649, 652, 602, 652], [158, 6, 602, 652, 602, 652], [164, 6, 615, 618, 602, 630],
  [171, 8, 602, 605, 564, 620], [178, 6, 536, 584, 536, 584], [184, 6, 552, 555, 536, 555], [190.5, 5, 526, 545, 526, 555], [200.5, 7, 468, 539, 468, 539],
  [209.5, 7, 420, 470, 420, 470], [220.5, 11, 326, 422, 316, 422], [234, 8, 316, 319, 298, 344], [243, 7, 306, 319, 298, 326],
  [254.5, 11, 260, 309, 220, 316], [267.5, 7, 230, 263, 220, 306], [276.5, 7, 212, 233, 202, 233], [287.5, -11, 202, 291, 202, 316],
  [299, -7, 240, 291, 212, 326], [305.5, 6, 230, 281, 230, 288], [317, 12, 220, 233, 182, 306], [328.5, 7, 182, 220, 182, 220],
  [337, -7, 202, 233, 182, 250], [344, 7, 192, 215, 192, 240], [350.5, -7, 192, 243, 192, 243], [357, 8, 230, 243, 220, 243], [364, 6, 202, 222, 202, 233],
  [373, -7, 202, 222, 182, 230], [382, -8, 220, 223, 220, 260], [393, -11, 220, 233, 220, 268], [404.5, -7, 240, 271, 240, 278],
  [411, -6, 268, 281, 250, 281], [417, -7, 260, 281, 250, 281], [424, -7, 278, 291, 278, 291], [434, 14, 278, 291, 278, 291], [444, 8, 278, 281, 278, 288],
  [453.5, 10, 230, 291, 230, 291], [469.5, 11, 175, 233, 175, 233], [482.5, -7, 175, 185, 164, 192], [491, 10, 182, 185, 175, 202],
  [498.5, 6, 164, 185, 164, 192], [507.5, 7, 144, 167, 144, 175], [518.5, -11, 144, 157, 137, 202], [530, 8, 175, 178, 144, 178],
  [540, 14, 175, 178, 164, 202], [552, 10, 175, 178, 164, 178], [560, 8, 164, 167, 164, 175], [565, 6, 154, 167, 154, 167], [570.5, 5, 137, 157, 137, 157],
  [586, 20, 89, 139, 89, 144], [610.5, 15, 89, 119, 78, 144], [628, 10, 89, 92, 89, 106], [646.5, -11, 89, 129, 40, 164],
  [662, -12, 144, 215, 126, 278], [673, 7, 212, 215, 192, 230], [684.5, -11, 220, 367, 220, 374], [700, -12, 364, 395, 336, 478],
  [713.5, -7, 402, 460, 374, 468], [729, -16, 458, 567, 458, 567], [747, -12, 574, 615, 554, 630], [765, -12, 612, 708, 602, 744],
  [776, 8, 688, 697, 678, 726], [785, -6, 695, 728, 668, 744], [796.5, 7, 620, 708, 612, 708], [806, 7, 582, 615, 574, 650],
  [816.5, 7, 564, 584, 554, 622], [825.5, -7, 582, 615, 582, 640], [831, -7, 622, 640, 622, 640], [837, 7, 650, 653, 602, 653], [842, 5, 640, 652, 612, 652],
  [848, 8, 658, 670, 612, 678], [854.5, 6, 592, 643, 592, 660], [861, 8, 574, 605, 574, 612], [874.5, 11, 545, 584, 545, 584], [888, -7, 554, 567, 536, 612],
  [897, 7, 564, 584, 564, 612], [905, 18, 564, 567, 564, 574], [917.5, -7, 564, 577, 564, 577], [927, -10, 574, 584, 564, 594],
  [936, -7, 582, 602, 582, 602], [942, -6, 602, 632, 582, 632], [955.5, -15, 630, 746, 630, 754], [969, 8, 695, 708, 688, 744],
  [977, -12, 695, 708, 688, 715], [983, -6, 695, 708, 688, 726], [988, 6, 688, 708, 688, 708], [998, 12, 660, 690, 654, 726], [1006.5, 6, 658, 670, 658, 688],
  [1022.5, 15, 612, 680, 592, 680], [1040.5, 7, 574, 612, 574, 612], [1049, -7, 582, 605, 574, 630], [1063, 16, 574, 622, 574, 622],
  [1076, 7, 582, 585, 564, 592], [1083, -6, 602, 615, 592, 615], [1092, 14, 592, 595, 584, 602], [1108, 16, 574, 584, 536, 612],
  [1124, -8, 574, 584, 574, 584], [1131, 6, 564, 582, 554, 582], [1136, 7, 545, 567, 545, 567], [1142, 8, 536, 555, 536, 555], [1158, 14, 526, 539, 526, 545],
  [1172.5, -11, 536, 632, 536, 632], [1184, -7, 602, 615, 592, 622], [1191, -6, 622, 650, 612, 660], [1199.5, -7, 650, 718, 640, 726],
  [1213, -12, 716, 736, 716, 754], [1224.5, 7, 678, 736, 678, 736], [1232, 6, 668, 680, 668, 688], [1240.5, 6, 620, 670, 620, 678],
  [1248.5, 6, 592, 622, 582, 622], [1257, 10, 582, 585, 582, 594], [1266, 8, 592, 595, 582, 595], [1279, 11, 582, 595, 582, 595], [1286.5, -6, 592, 660, 592, 668],
  [1294, 7, 658, 670, 654, 678], [1303, 12, 658, 670, 658, 678], [1316, -6, 678, 708, 678, 708], [1328, 12, 695, 698, 688, 708],
  [1340.5, -6, 706, 766, 695, 766], [1358.5, -15, 764, 860, 764, 867], [1381, -16, 850, 880, 830, 905], [1396.5, 11, 905, 918, 857, 943],
  [1412.5, -11, 857, 908, 850, 926],
];

function Candles({ data, s }: { data: Candle[]; s: Scale }) {
  return (
    <g>
      {data.map(([cx, w, t, b, h, l], i) => {
        const x = Math.floor(s.x + cx / s.kx);
        const half = Math.max(1, Math.round((Math.abs(w) / s.kx - 1) / 2));
        const y = (v: number) => Math.round(s.y + v / s.ky);
        return (
          <g key={i} fill={w > 0 ? UP : DOWN}>
            <rect x={x} y={y(h)} width={1} height={Math.max(1, y(l) - y(h))} />
            <rect x={x - half} y={y(t)} width={half * 2 + 1} height={Math.max(1, y(b) - y(t))} />
          </g>
        );
      })}
    </g>
  );
}

/* x centre, width, top; a negative width is a slate bar */
const volEarly = [[123, -9, 111], [165, -10, 111], [181, -5, 121], [207, -5, 126], [213, 5, 126], [295, 4, 126], [326, 4, 126], [370, -11, 102], [431, -4, 126], [436, 5, 120], [545, 7, 114], [614, 5, 123], [622, -5, 126], [646, -9, 108], [718, -5, 123], [725, -5, 126], [748, 5, 123], [821, 9, 108], [863, -5, 123], [921, 3, 123], [947, 3, 123], [1071, 5, 123], [1084, 7, 111], [1120, 7, 117]];
const volNoon = [[41, 10, 1459], [58, 13, 1444], [75, 6, 1473], [81, 6, 1467], [102, 24, 1391], [135.5, -21, 1421], [197, 8, 1465], [203, -8, 1468], [221.5, 13, 1449], [235, -8, 1470], [252, 12, 1457], [268, 9, 1464], [287.5, -11, 1459], [299, -7, 1470], [314, 11, 1457], [338, 7, 1468], [364, -7, 1470], [374, -8, 1464], [393, -11, 1457], [407, -6, 1470], [453.5, 11, 1459], [467, 11, 1462], [480, -7, 1467], [491, 6, 1472], [505, 6, 1470], [518.5, -11, 1457], [541, 6, 1472], [584.5, 23, 1414], [608, 16, 1431], [628, 9, 1459], [643, -14, 1447], [661, -13, 1457], [685, -9, 1462], [701, -14, 1452], [727, -16, 1444], [747, -13, 1452], [762, -10, 1452], [803, -6, 1469], [817, 9, 1464], [838, -7, 1469], [871.5, 13, 1454], [889, -7, 1467], [953, -16, 1447], [994, 9, 1462], [1020, 20, 1424], [1041, 8, 1464], [1060.5, 14, 1447], [1089, -7, 1466], [1109, 18, 1436], [1126, -7, 1466], [1173.5, -13, 1452], [1199, -8, 1468], [1214, -14, 1452], [1237, 7, 1468], [1278, 12, 1464], [1316, -6, 1467], [1341, -8, 1469], [1356, -20, 1424], [1377.5, -13, 1447], [1396.5, 11, 1459], [1409, -9, 1462], [1443, 46, 880], [1490.5, -47, 701], [1526, -14, 1436], [1549, 20, 1426]];
const volOpen = [[1405, 11, 1263], [1418, 9, 1307], [1430, 9, 1282], [1441, 7, 1308], [1454, 14, 1244], [1468, 9, 1288], [1483, -12, 1269], [1497, -11, 1275], [1510, 9, 1284], [1523, -9, 1284], [1535, -10, 1283], [1547, -9, 1300], [1558, 7, 1306], [1569, 9, 1292], [1582, 9, 1285], [1594, 9, 1293], [1607, 9, 1301], [1618, 9, 1300], [1630, -9, 1290], [1641, -8, 1289], [1650, 3, 1318], [1658, -7, 1294], [1668, -7, 1300], [1677, -7, 1304], [1689, -12, 1281]];
const volLate = [[2, 10, 750], [13, -9, 771], [32, -16, 729], [48, 13, 759], [65, -11, 759], [77, 9, 771], [91, -7, 777], [103, -11, 756], [115, -9, 771], [130, 13, 750], [143, -7, 780], [152, -5, 783], [164, -11, 765], [176, -6, 774], [192, -17, 726], [206, 9, 774], [218, -8, 774], [229, 6, 780], [239, -4, 786], [248, -8, 768], [261, -13, 759], [277, -11, 759], [295, -18, 702], [315, -15, 741], [330, 8, 777], [340, 10, 768], [352, 9, 768], [362, 3, 792], [370, 4, 786], [377, 3, 783], [386, 11, 762], [401, 8, 777], [411, -6, 780], [423, 5, 786], [432, 5, 783], [442, -6, 780]];

function Volume({ data, s }: { data: number[][]; s: Scale }) {
  return (
    <g opacity="0.95">
      {data.map(([cx, w, top], i) => {
        const x = Math.round(s.x + (cx - Math.abs(w) / 2) / s.kx);
        const y = Math.round(s.y + top / s.ky);
        return <rect key={i} x={x} y={y} width={Math.max(1, Math.round(Math.abs(w) / s.kx))} height={1329 - y} fill={w > 0 ? BLUE : SLATE} />;
      })}
    </g>
  );
}

const tiny = Array.from({ length: 318 }, (_, i) => ({ x: 60 + i * 4 + ((i * 7) % 3), h: 3 + ((i * 37) % 11 > 7 ? 6 : (i * 13) % 5), b: (i * 5) % 7 > 1 }));

const vwapOpen = [[15, 594], [39, 596], [56, 596], [72, 599], [103, 618], [196, 1096], [251, 1048], [281, 1023], [310, 996], [336, 979], [367, 908], [400, 871], [433, 812], [469, 773], [500, 751], [531, 736], [559, 734], [588, 729], [614, 724], [640, 712], [671, 694], [699, 678], [730, 660], [756, 648], [785, 636], [811, 628], [832, 626], [851, 621], [875, 618], [897, 618], [951, 628], [972, 631], [992, 638], [1016, 640], [1034, 640], [1054, 643], [1068, 643], [1084, 646], [1103, 648], [1122, 648], [1139, 648], [1151, 650], [1165, 653], [1182, 655], [1201, 662], [1222, 665], [1236, 670], [1250, 672], [1260, 672], [1272, 677], [1291, 682], [1310, 689], [1334, 704], [1360, 714], [1379, 719], [1396, 724], [1412, 729], [1424, 729], [1432, 731], [1440, 733], [1457, 736], [1472, 738], [1486, 738], [1495, 741], [1505, 741], [1515, 743], [1526, 743], [1536, 743]];
const vwapKnots = [[60, 385], [200, 391], [408, 401], [718, 411], [767, 417], [980, 426], [1175, 434], [1290, 440], [1306, 442]];
const vwapNoon: number[][] = [];
for (let x = 60, i = 0; x < 1304; x += i % 9 === 3 ? 6 : i % 3 === 1 ? 5 : 3, i++) {
  const k = vwapKnots.findIndex((p) => p[0] > x);
  const [a, b] = [vwapKnots[k - 1] ?? vwapKnots[0], vwapKnots[k]];
  const f = b[0] === a[0] ? 0 : (x - a[0]) / (b[0] - a[0]);
  vwapNoon.push([x, Math.round(a[1] + f * (b[1] - a[1]))]);
}
const plus = (x: number, y: number) => `M${x - 1} ${y}h3v1h-3zM${x} ${y - 1}h1v3h-1z`;

const priceY = (p: number) => Math.round(98.3 + (2880 - p) * 3.758);
const PRICES = Array.from({ length: 33 }, (_, i) => 2880 - i * 10);
const TIMES: [string, number][] = [["14:00", 91], ["14:05", 154], ["14:10", 218], ["14:15", 279], ["14:20", 341], ["14:25", 407], ["14:30", 470], ["14:35", 529], ["14:40", 588], ["14:45", 652], ["14:50", 709], ["14:55", 805], ["15:00", 886], ["15:05", 972], ["15:10", 1082], ["15:15", 1164], ["15:20", 1247], ["17", 1366], ["09:10", 1689], ["09:20", 1953], ["09:25", 2019], ["09:30", 2086], ["09:35", 2153], ["09:40", 2220], ["09:45", 2287], ["09:50", 2354], ["09:55", 2420]];
const fmt = (p: number) => p.toLocaleString("en-US");

function ChartDrawing() {
  return (
    <svg viewBox="58 82 2451 1273" preserveAspectRatio="none" className="block h-full w-full" shapeRendering="crispEdges" fontSize="12" role="img" aria-label="価格チャート">
      <rect x="58" y="82" width="2451" height="1273" fill="#000" />
      <g fill="#ffffff" fillOpacity="0.055">
        {PRICES.map((p) => <rect key={p} x="58" y={priceY(p)} width="2405" height="1" />)}
      </g>
      <rect x="1174" y="294" width="977" height="240" fill="#089981" fillOpacity="0.2" />
      <rect x="1174" y="534" width="977" height="114" fill="#f23628" fillOpacity="0.2" />
      <rect x="1405" y="294" width="78" height="240" fill="#00999f" fillOpacity="0.2" />
      <rect x="1366" y="230" width="1097" height="590" fill="#2962ff" fillOpacity="0.05" />
      <rect x="1174" y="294" width="977" height="1" fill="#06504c" />
      <rect x="1366" y="613" width="1097" height="13" fill="#2962c8" fillOpacity="0.14" />
      <rect x="1174" y="534" width="977" height="1" fill="#868993" />

      <g>
        {tiny.map((t, i) => <rect key={i} x={t.x} y={1329 - t.h} width="1" height={t.h} fill={t.b ? BLUE : SLATE} />)}
      </g>
      <Volume data={volEarly} s={{ x: 0, y: 1280, kx: 1.823, ky: 3 }} />
      <rect x="58" y="1110" width="2083" height="12" fill="#ff9800" fillOpacity="0.2" />
      <path d="M58 1110.500H2140.500V1121.500H58" fill="none" stroke="#ff9800" />
      <Volume data={volNoon} s={NOON_B} />
      <Volume data={volOpen} s={{ x: 0, y: 0, kx: 1, ky: 1 }} />
      <Volume data={volLate} s={{ x: 1700, y: 1060, kx: 1.823, ky: 3 }} />
      <path
        d="M58 1324L90 1323L140 1326L230 1324L280 1326L360 1323L450 1326L560 1323L700 1326L740 1320L780 1318L805 1322L850 1320L896 1323L950 1321L986 1318L1037 1314L1060 1317L1084 1321L1124 1323L1173 1320L1218 1322L1280 1322L1330 1318L1343 1298L1365 1275L1390 1272L1430 1262L1497 1248L1520 1282L1570 1286L1620 1290L1700 1300L1749 1309L1777 1309L1785 1314L1851 1316L1875 1313L1925 1315L1947 1321"
        fill="none" stroke="#55551f" strokeDasharray="1 3" strokeWidth="1.500"
      />
      <rect x="58" y="1113" width="412" height="1" fill="#c0342f" />
      <text x="460" y="1112" fontSize="9" fill="#8a1f26">1230</text>

      <path d="M1354.500 82V1329" stroke="#6e611c" strokeDasharray="1 3" />
      <path d="M1411 512L1424 478L1436 437L1446 406L1456 376L1463 353L1473 322L1477 296" fill="none" stroke="#6d7480" strokeDasharray="6 6" />

      <path d={vwapNoon.map(([x, y]) => plus(x, y)).join("")} fill="#2962ff" />
      <Candles data={noonA} s={NOON_A} />
      <Candles data={noonB} s={NOON_B} />
      <path d={vwapOpen.map(([x, y]) => plus(Math.round(1300 + x / 2.3758), Math.round(200 + y / 2.45))).join("")} fill="#2962ff" />
      <Candles data={morningA} s={MORNING_A} />
      <Candles data={morningB} s={MORNING_B} />

      <path d="M1335 1000.500H1342" stroke={UP} />
      <path d="M1341 1000H2463" stroke="#00bcd4" strokeWidth="2" />
      <path d="M68 1000.500H1400" stroke="#fbc02d" strokeWidth="3" strokeDasharray="3 9" />
      <path d="M1400 1000.500H2463" stroke="#b4cc60" strokeWidth="1" strokeDasharray="3 9" />
      <path d="M1354 655.500H1942" stroke="#a89c50" strokeDasharray="5 6" />
      <circle cx="1366" cy="241" r="4" fill="#2e7d32" shapeRendering="auto" />

      <rect x="1607" y="196" width="544" height="16" fill="#fff" fillOpacity="0.14" />
      <rect x="1743" y="434" width="544" height="16" fill="#fff" fillOpacity="0.14" />
      <g fill="#fff" fontWeight="bold" fontSize="11" shapeRendering="auto">
        <text x="1609" y="208">CUP AND Handles Rev</text>
        <text x="1745" y="446">FLEMING SELL 50%</text>
      </g>
      <g fill="#7fdfee" shapeRendering="auto">
        {[0, 45, 90, 135, 180, 225, 270].map((a) => (
          <circle key={a} cx={1779.5 + 6.5 * Math.sin(((a + 90) * Math.PI) / 180)} cy={408.5 - 6.5 * Math.cos(((a + 90) * Math.PI) / 180)} r="1.500" />
        ))}
      </g>

      <path d="M1814.500 82V1329" stroke="#8b93a1" strokeDasharray="5 6" />
      <path d="M58 131.500H2442" stroke="#8b93a1" strokeDasharray="5 6" />

      <rect x="2463" y="82" width="1" height="1273" fill="#8c8c8c" />
      <rect x="58" y="1329" width="2451" height="1" fill="#8c8c8c" />

      <g fill={TXT} shapeRendering="auto">
        {PRICES.filter((p) => p !== 2870 && p !== 2640).map((p) => <text key={p} x="2471" y={priceY(p) + 4}>{fmt(p)}</text>)}
        <g textAnchor="middle">
          {TIMES.map(([t, x]) => <text key={t} x={x} y="1347">{t}</text>)}
        </g>
      </g>

      <g shapeRendering="auto">
        <rect x="2442" y="121" width="65" height="20" rx="2" fill="#363a45" />
        <circle cx="2452.500" cy="131.500" r="8" fill="none" stroke="#e8e8e8" />
        <path d="M2452.500 127.500v8M2448.500 131.500h8" stroke="#e8e8e8" />
        <text x="2471" y="135" fill="#fff" fontWeight="500">2,871</text>
        <rect x="2425" y="495" width="82" height="17" rx="2" fill="#2962ff" />
        <text x="2428" y="508" fill="#fff" fontSize="11">VWAP</text>
        <text x="2471" y="508" fill="#fff" fontWeight="500">2,772</text>
        <rect x="2464" y="605" width="43" height="17" fill="#ffeb3b" />
        <text x="2471" y="618" fill="#6b6118">00:06</text>
        <rect x="2464" y="991" width="43" height="18" fill="#fbc02d" />
        <text x="2471" y="1004" fill="#4a3a08">2,640</text>
        <rect x="2396" y="1313" width="113" height="16" fill="#ffeb3b" />
        <text x="2399" y="1325" fill="#3a3508" fontSize="11">Volume MA</text>
        <text x="2471" y="1325" fill="#3a3508" fontSize="11">10.06 K</text>
        <rect x="1747" y="1330" width="134" height="23" rx="2" fill="#363a45" />
        <text x="1755" y="1348" fill="#fff" fontWeight="500">6月 17 (水)</text>
        <text x="1825" y="1348" fill="#fff" fontWeight="500">09:14:00</text>
      </g>
      <rect x="2463" y="121" width="1" height="20" fill="#8c8c8c" />
      <rect x="2463" y="495" width="1" height="17" fill="#8c8c8c" />
      <rect x="2463" y="1313" width="1" height="16" fill="#8c8c8c" />
    </svg>
  );
}

function Chart() {
  return (
    <section className="relative min-h-0 flex-1 overflow-hidden rounded border-2 border-[#8c8c8c] bg-black">
      <ChartDrawing />
      <div className="absolute top-[5px] left-[7px] flex h-5 items-center whitespace-nowrap text-[#dbdbdb]">
        <span className="flex size-[18px] items-center justify-center rounded-full bg-[#2e2e2e] text-[10px] text-[#8c8c8c]">5</span>
        <h1 className="ml-[5px] text-[15px]">ＧＯ · 15秒 · TSE</h1>
        <span className="ml-[10px] flex size-[18px] items-center justify-center rounded-full bg-[#0a2a25]"><span className="size-[9px] rounded-full bg-[#42bda8]" /></span>
        <span className="ml-[8px] text-[13px]">出来高</span>
        <span className="ml-[2px] text-[13px] text-[#089981]">13.3K</span>
      </div>
      <div className="absolute top-[31px] left-[7px] flex items-center gap-[16px] text-[#dbdbdb]">
        <button className="flex h-[21px] w-[32px] items-center justify-center gap-[5px] rounded-sm border border-[#3d3d3d] bg-black text-xs"><Chev />9</button>
        <svg width="18" height="18" viewBox="0 0 18 18" fill="none" stroke="#a274ff" strokeWidth="1.500" aria-hidden="true">
          <circle cx="9" cy="9" r="9" fill="#2a1a45" stroke="none" />
          <path d="M4.500 8a4.700 4.700 0 0 1 8.500-1.500M13.500 4v3h-3M13.500 10A4.700 4.700 0 0 1 5 11.500M4.500 14v-3h3" />
        </svg>
      </div>
      <div className="absolute top-[8px] right-[56px] flex h-[19px] items-stretch gap-px text-[9px] font-semibold text-white">
        <span className="flex w-[52px] items-center justify-center bg-[#18191c]">Daily Gap</span>
        <span className="flex w-[35px] items-center justify-center bg-[#2e6b30]">3.79%</span>
      </div>
      <a href="#tv" aria-label="TradingView" className="absolute bottom-[39px] left-[9px] text-[#dbdbdb]"><TvMark w={31} /></a>
      <button aria-label="チャート設定" className="absolute right-[13px] bottom-[3px] text-[#dbdbdb]"><Ico n="gear" size={18} w={1.6} /></button>
    </section>
  );
}

/* ---------- bottom bars ---------- */

const RANGES: [string, string][] = [["1日", "w-[34px]"], ["5日", "w-[34px]"], ["1ケ月", "w-[46px]"], ["3ヶ月", "w-[48px]"], ["6ヶ月", "w-[48px]"], ["年初来", "w-[54px]"], ["1年", "w-[33px]"], ["5年", "w-[33px]"], ["すべて", "w-[56px]"]];
const DRAW = ["hline", "lineMid", "lineBox", "channel", "up", "dollar", "rect", "gridbox", "down", "range", "forecast", "vrange", "zigzag", "fib", "pin", "short", "text"];

function RangeBar() {
  return (
    <div className="flex h-[38px] shrink-0 items-center rounded bg-[#0f0f0f] pl-[7px] text-[13px] whitespace-nowrap text-[#dbdbdb]">
      {RANGES.map(([t, w]) => <button key={t} className={`h-full ${w}`}>{t}</button>)}
      <Sep c="ml-[2px]" />
      <button className="ml-[11px]" aria-label="日付へ移動"><Ico n="goto" size={26} /></button>
      <div className="ml-auto flex items-center pr-[6px]">
        <button>09:19:38 UTC+9</button>
        <Sep c="mx-[10px]" />
        <button className="text-sm">配当調整</button>
        <button className="ml-[8px] flex size-[34px] items-center justify-center rounded bg-[#3d3d3d]" aria-label="縮小"><Ico n="collapse" size={22} w={1.4} /></button>
      </div>
    </div>
  );
}

function Panel() {
  return (
    <div className="flex h-[38px] shrink-0 items-center rounded-t bg-[#0f0f0f] text-sm whitespace-nowrap text-[#dbdbdb]">
      <button className="flex w-[452px] items-center gap-[7px] pl-[8px]">
        <span className="relative flex size-6 items-center justify-center rounded bg-[#2e2e2e] text-white">
          <TvMark w={15} />
          <span className="absolute -top-px -right-px size-[6px] rounded-full bg-[#089981]" />
        </span>
        ペーパートレード
      </button>
      <div className="flex h-full items-center rounded bg-[#1f1f1f] pr-[1px]">
        <svg width="25" height="16" viewBox="0 0 25 16" fill="#575757" aria-hidden="true">
          {[0, 1, 2].map((r) => [0, 1].map((c) => <rect key={`${r}${c}`} x={8 + c * 6} y={1 + r * 5} width="2" height="2" />))}
        </svg>
        {DRAW.map((n) => (
          <button key={n} className="flex h-full w-[38px] items-center justify-center" aria-label={n}><Ico n={n} size={28} w={1.2} /></button>
        ))}
      </div>
      <button className="mr-[9px] ml-auto" aria-label="パネルを開く"><Ico n="chevUp" size={28} /></button>
      <button className="mr-[7px]" aria-label="最大化"><Ico n="maximise" size={24} /></button>
    </div>
  );
}

export default function App() {
  return (
    <div className={`flex h-screen flex-col overflow-hidden bg-[#2e2e2e] ${FONT}`}>
      <TabBar />
      <Toolbar />
      <div className="flex min-h-0 flex-1 gap-1 pt-1">
        <LeftBar />
        <main className="flex min-w-0 flex-1 flex-col">
          <Chart />
          <div className="mt-px flex flex-col gap-1">
            <RangeBar />
            <Panel />
          </div>
        </main>
        <RightBar />
      </div>
      <div className="h-[2px] shrink-0 bg-[#1c1517] pl-[196px]"><span className="block h-[2px] w-[46px] bg-[#5a5a5a]" /></div>
    </div>
  );
}
